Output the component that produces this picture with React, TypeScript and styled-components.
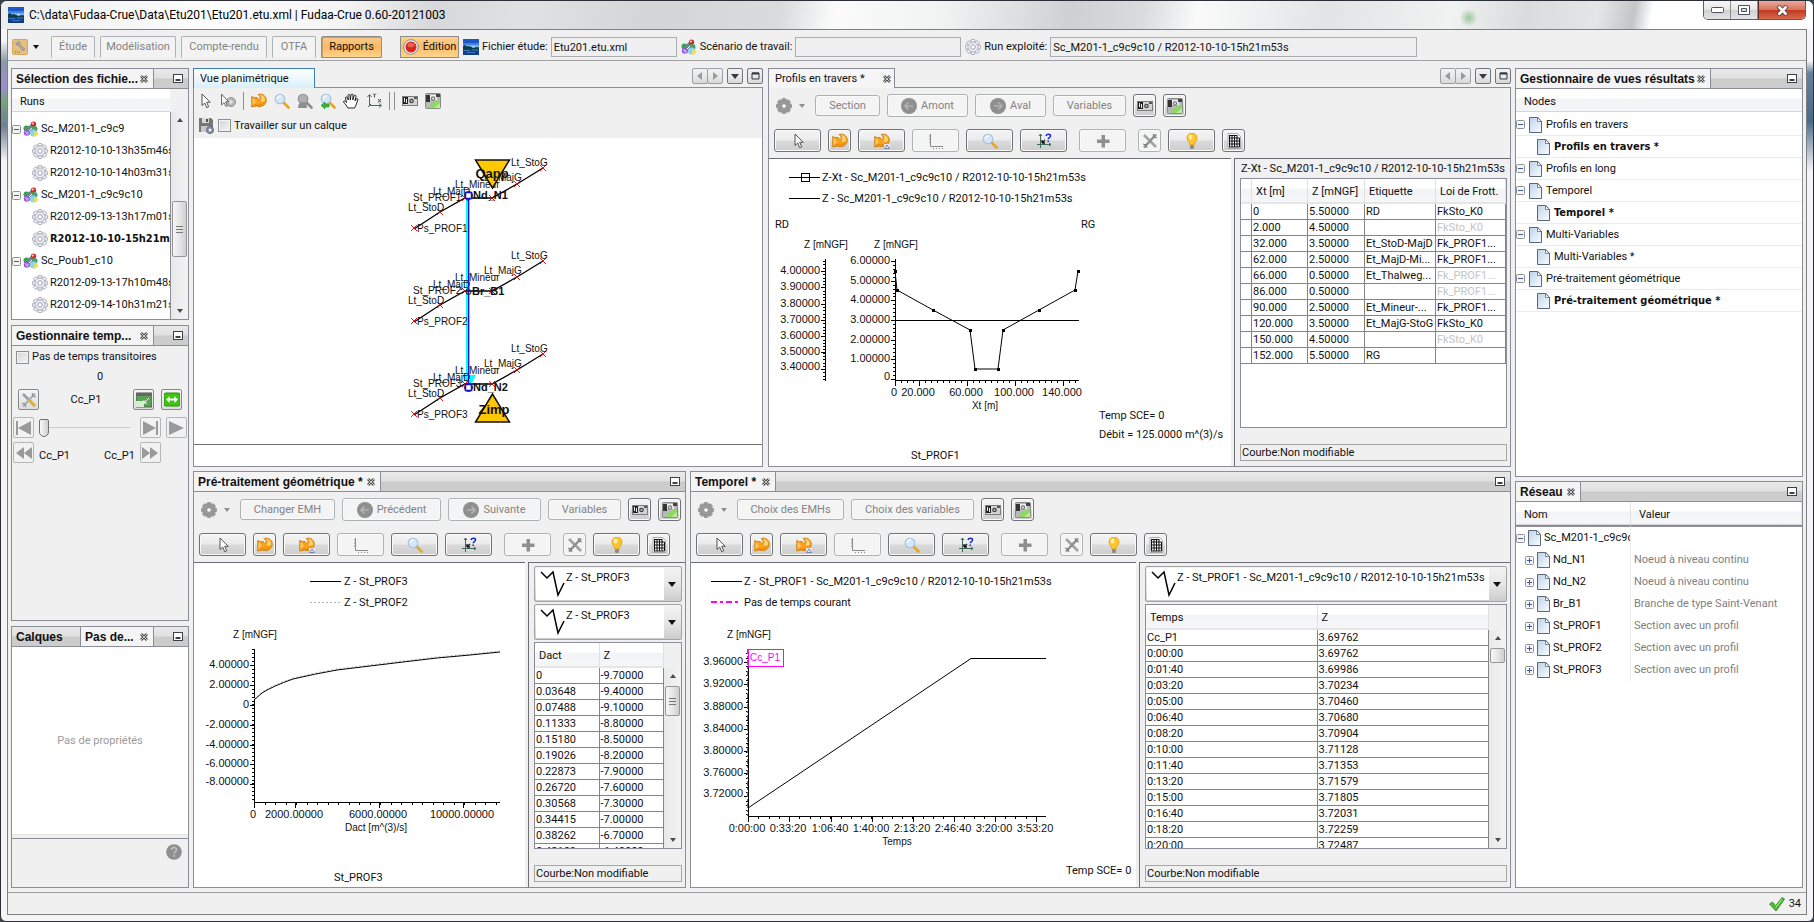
import React, { ReactNode, useState } from 'react';
import styled, { createGlobalStyle, css } from 'styled-components';

const GlobalStyle = createGlobalStyle`
  * { box-sizing: border-box; }
  body { margin: 0; background: #3a4450; color: #111; font: 11px/14px Roboto, "DejaVu Sans Condensed", sans-serif; }
  button, input, select { font: inherit; color: inherit; margin: 0; padding: 0; }
  ul { list-style: none; margin: 0; padding: 0; }
  svg { display: block; flex: none; }
`;

const LINE = '#8b8d99';

/* ---------- window frame ---------- */

const Frame = styled.div`
  height: 100vh;
  min-height: 800px;
  min-width: 1500px;
  display: flex;
  flex-direction: column;
  border: 1px solid #2b2e36;
  border-radius: 7px 7px 6px 6px;
  padding: 0 6px 6px;
  background:
    linear-gradient(180deg, transparent 60px, #64809c 72px, #4b6a88 120px, #8fa4b6 140px, transparent 170px) right / 6px 100% no-repeat,
    linear-gradient(180deg, transparent 40px, #8c9aa8 60px, #9b8fcf 85px, #7aa37c 100px, #6e8194 125px, transparent 160px) left / 6px 100% no-repeat,
    #f6f4f4;
`;

const TitleBar = styled.header`
  height: 28px;
  flex: none;
  display: flex;
  align-items: center;
  gap: 5px;
  margin: 0 -6px;
  padding-left: 7px;
  border-radius: 6px 6px 0 0;
  font-size: 12px;
  line-height: 16px;
  color: #000;
  background:
    radial-gradient(circle at 81% 60%, #9ac79c 0, transparent 9px),
    linear-gradient(100deg, #eceeee 0, #fdfdfd 12%, #f4f4f4 19%, #d6d8da 24%, #dfe1e2 29%, #d3d5d6 36%, #d9dbdc 43%, #fbfbfb 46%, #f1f2f2 52%, #ced1d3 59%, #d9dcdd 63%, #fafafa 66%, #e2e4e5 73%, #f1f2f2 80%, #d9dbdc 84%, #e4e5e6 88%, #c3c5c7 90%, #fff 91%, #fff 100%);
`;

const WindowButtons = styled.div`
  margin-left: auto;
  margin-right: 7px;
  align-self: flex-start;
  display: flex;
  height: 19px;
  border: 1px solid #5b5e63;
  border-top: 0;
  border-radius: 0 0 5px 5px;
  overflow: hidden;
`;

const WindowButton = styled.button<{ $close?: boolean }>`
  width: ${p => (p.$close ? 47 : 27)}px;
  display: grid;
  place-items: center;
  border: 0;
  border-left: ${p => (p.$close ? '1px solid #5b2a22' : '0')};
  border-right: ${p => (p.$close ? '0' : '1px solid #8a8d91')};
  background: ${p =>
    p.$close
      ? 'linear-gradient(#e9a99b, #d8735f 48%, #c03a20 52%, #d8694c)'
      : 'linear-gradient(#f7f7f7, #e6e6e7 48%, #cfd0d2 52%, #e3e4e5)'};
`;

const Client = styled.div`
  flex: 1;
  min-height: 0;
  display: flex;
  flex-direction: column;
  border: 1px solid #7d8080;
  background: #f0f0f0;
`;

/* ---------- main tool bar ---------- */

const MainBar = styled.nav`
  height: 31px;
  flex: none;
  display: flex;
  align-items: center;
  padding: 4px 4px 0;
  border-bottom: 1px solid #a0a0a0;
`;

const PerspectiveRow = styled.div`
  display: flex;
  gap: 5px;
  margin: 0 18px 0 12px;
`;

const Perspective = styled.button<{ $w: number; $on?: boolean }>`
  width: ${p => p.$w}px;
  height: 22px;
  border: 1px solid #aeb2b5;
  border-bottom-color: ${p => (p.$on ? '#8d8d8d' : '#f0f0f0')};
  border-radius: 2px 2px 0 0;
  color: ${p => (p.$on ? '#111' : '#838383')};
  background: ${p => (p.$on ? 'linear-gradient(#fbcb8c, #f8b762 50%, #fdd48a)' : '#f3f3f3')};
  ${p => p.$on && css`border-color: #8d8d8d; box-shadow: inset 1px 1px 0 #c7a06c;`}
`;

const EditButton = styled.button`
  height: 22px;
  width: 59px;
  display: flex;
  align-items: center;
  justify-content: center;
  gap: 4px;
  border: 1px solid #8d8d8d;
  background: linear-gradient(#ffd08f, #fcbc69 50%, #ffd58e);
`;

const BarField = styled.label`
  display: flex;
  align-items: center;
  gap: 3px;
  margin-left: 4px;
  white-space: nowrap;
`;

const BarInput = styled.input<{ $w: number }>`
  width: ${p => p.$w}px;
  height: 20px;
  border: 1px solid #abadb3;
  background: #efefef;
  padding: 0 2px;
`;

/* ---------- docking layout ---------- */

const Main = styled.main`
  flex: 1;
  min-height: 0;
  display: grid;
  grid-template-columns: 178px minmax(0, 1fr) 288px;
  gap: 4px;
  padding: 7px 3px 4px;
`;

const LeftDock = styled.div`
  display: grid;
  grid-template-rows: 252fr 296fr 262fr;
  gap: 5px;
  min-height: 0;
`;

const CenterDock = styled.div`
  display: grid;
  grid-template-rows: minmax(0, 399fr) minmax(0, 417fr);
  gap: 4px;
  min-height: 0;
`;

const DockRow = styled.div<{ $cols: string; $gap: number }>`
  display: grid;
  grid-template-columns: ${p => p.$cols};
  gap: ${p => p.$gap}px;
  min-height: 0;
`;

const RightDock = styled.div`
  display: grid;
  grid-template-rows: 409fr 407fr;
  gap: 4px;
  min-height: 0;
`;

const Panel = styled.section`
  display: flex;
  flex-direction: column;
  min-height: 0;
  min-width: 0;
  border: 1px solid ${LINE};
  overflow: hidden;
`;

const PanelHead = styled.div`
  height: 20px;
  flex: none;
  display: flex;
  border-bottom: 1px solid ${LINE};
  background: linear-gradient(#e9e9e9, #e0e0e0 48%, #cbcbcb 52%, #cdcdcd);
`;

const PanelTab = styled.div<{ $w: number; $off?: boolean }>`
  width: ${p => p.$w}px;
  display: flex;
  align-items: center;
  justify-content: space-between;
  padding: 0 5px 0 4px;
  border-right: 1px solid ${LINE};
  background: ${p => (p.$off ? 'transparent' : '#f4f4f4')};
  font: bold 12px/18px "Liberation Sans", Arial, sans-serif;
  white-space: nowrap;
`;

const IconButton = styled.button`
  display: grid;
  place-items: center;
  border: 0;
  background: none;
`;

const MinimizeSlot = styled.div`
  margin-left: auto;
  padding-right: 5px;
  display: flex;
`;

const Body = styled.div<{ $white?: boolean }>`
  flex: 1;
  min-height: 0;
  display: flex;
  flex-direction: column;
  background: ${p => (p.$white ? '#fff' : '#f0f0f0')};
`;

const Editor = styled.section`
  display: flex;
  flex-direction: column;
  min-height: 0;
  min-width: 0;
`;

const EditorHead = styled.div`
  height: 20px;
  flex: none;
  display: flex;
  border-bottom: 1px solid ${LINE};
`;

const EditorTab = styled.div<{ $w: number; $active?: boolean }>`
  width: ${p => p.$w}px;
  height: 20px;
  display: flex;
  align-items: center;
  justify-content: space-between;
  padding: 0 3px 0 6px;
  border: 1px solid ${p => (p.$active ? '#3c7fb1' : LINE)};
  border-bottom: 0;
  background: ${p => (p.$active ? 'linear-gradient(#fdfeff, #e9f6fd 60%, #d7effc)' : '#f5f5f5')};
`;

const EditorBody = styled.div`
  flex: 1;
  min-height: 0;
  display: flex;
  flex-direction: column;
  border: 1px solid ${LINE};
  border-top: 0;
  background: #f0f0f0;
`;

const NavRow = styled.div`
  margin-left: auto;
  display: flex;
  gap: 4px;
  height: 16px;
`;

const NavGroup = styled.div`
  display: flex;
`;

const NavButton = styled.button`
  width: 16px;
  height: 16px;
  display: grid;
  place-items: center;
  border: 1px solid #6f7680;
  border-radius: 2px;
  background: linear-gradient(#f2f2f2, #e9e9e9 50%, #d8d8d8);
  &:disabled { border-color: #9a9ea5; }
  & + &:disabled { margin-left: -1px; }
`;

/* ---------- columns, trees, tables ---------- */

const ColumnHead = styled.div<{ $w?: string }>`
  height: 23px;
  flex: none;
  width: ${p => p.$w ?? '100%'};
  padding: 6px 8px 0;
  border-bottom: 1px solid #d5d5d5;
  background: linear-gradient(#fff 40%, #f2f4f7 45%, #f4f6f8);
`;

const TreeArea = styled.div`
  flex: 1;
  min-height: 0;
  display: flex;
  overflow: hidden;
`;

const Tree = styled.ul<{ $lines?: boolean; $clip?: boolean }>`
  flex: 1;
  min-width: 0;
  overflow: hidden;
  background: #fff;
  padding-top: ${p => (p.$clip ? 6 : 2)}px;
  border-right: ${p => (p.$clip ? `1px solid ${LINE}` : '0')};
  & > li { border-bottom: ${p => (p.$lines ? '1px solid #ececec' : '0')}; }
`;

const TreeItem = styled.li<{ $indent: number; $gap?: number; $bold?: boolean }>`
  height: 22px;
  display: flex;
  align-items: center;
  gap: ${p => p.$gap ?? 4}px;
  padding-left: ${p => p.$indent}px;
  white-space: nowrap;
  ${p => p.$bold && css`font-family: "DejaVu Sans Condensed", sans-serif; font-weight: bold;`}
`;

const ScrollTrack = styled.div`
  width: 17px;
  flex: none;
  display: flex;
  flex-direction: column;
  align-items: center;
  padding: 6px 0;
  background: linear-gradient(90deg, #e9e9e9, #f3f3f3);
`;

const ScrollThumb = styled.div<{ $top: number; $h: number }>`
  width: 15px;
  height: ${p => p.$h}px;
  margin-top: ${p => p.$top}px;
  margin-bottom: auto;
  border: 1px solid #979797;
  border-radius: 2px;
  background: linear-gradient(90deg, #f5f5f5, #e6e6e6 50%, #cfcfcf);
  display: grid;
  place-items: center;
`;

const TableBox = styled.div`
  flex: 1;
  min-height: 0;
  display: flex;
  overflow: hidden;
  border: 1px solid ${LINE};
  background: #fff;
`;

const TableClip = styled.div`
  flex: 1;
  min-width: 0;
  overflow: hidden;
`;

const ScrollSide = styled.div`
  display: flex;
  flex: none;
  padding-top: 25px;
  background: #f0f0f0;
`;

const Table = styled.table`
  width: 100%;
  table-layout: fixed;
  border-collapse: separate;
  border-spacing: 0;
`;

const Th = styled.th`
  height: 25px;
  padding: 3px 4px 0;
  font-weight: normal;
  text-align: left;
  white-space: nowrap;
  border-right: 1px solid #e0e0e0;
  border-bottom: 2px solid #e6e6e6;
  background: linear-gradient(#fff 40%, #f2f4f7 45%, #f4f6f8);
`;

const Td = styled.td<{ $dim?: boolean }>`
  height: 16px;
  padding: 0 0 0 1px;
  line-height: 15px;
  white-space: nowrap;
  overflow: hidden;
  border-right: 1px solid #858585;
  border-bottom: 1px solid #858585;
  color: ${p => (p.$dim ? '#c4c4c4' : 'inherit')};
`;

const NetTable = styled.table`
  width: 100%;
  table-layout: fixed;
  border-collapse: separate;
  border-spacing: 0;
  td { padding: 0; border-right: 1px solid #ececec; overflow: hidden; height: 22px; }
  td + td { border-right: 0; color: #808080; padding-left: 3px; white-space: nowrap; }
  th { height: 23px; padding: 4px 8px 0; font-weight: normal; text-align: left; border-right: 1px solid #e2e2e2; border-bottom: 1px solid #d5d5d5; background: linear-gradient(#fff 40%, #f2f4f7 45%, #f4f6f8); }
  tbody tr:first-child td { border-top: 2px solid ${LINE}; height: 24px; }
`;

const NetCell = styled.div<{ $indent: number }>`
  display: flex;
  align-items: center;
  gap: 3px;
  padding-left: ${p => p.$indent}px;
  white-space: nowrap;
`;

/* ---------- result view tool bars ---------- */

const ViewBar = styled.div`
  height: 35px;
  flex: none;
  display: flex;
  align-items: center;
  gap: 7px;
  padding: 0 5px;
`;

const OptionsButton = styled.button`
  width: 34px;
  flex: none;
  display: flex;
  align-items: center;
  justify-content: space-between;
  padding: 0 3px 0 2px;
  border: 0;
  background: none;
`;

const SwingButton = styled.button<{ $w: number; $h?: number; $left?: number }>`
  width: ${p => p.$w}px;
  height: ${p => p.$h ?? 23}px;
  margin-left: ${p => p.$left ?? 0}px;
  flex: none;
  display: flex;
  align-items: center;
  justify-content: center;
  gap: 4px;
  border: 1px solid #707378;
  border-radius: 3px;
  background: linear-gradient(#f4f4f4, #ebebeb 48%, #dadada 52%, #cdcdcd);
  box-shadow: inset 0 0 0 1px #fafafa;
  &:disabled { border-color: #adb2b5; background: #f4f4f4; color: #838383; }
`;

const SplitView = styled.div<{ $cols: string }>`
  flex: 1;
  min-height: 0;
  display: grid;
  grid-template-columns: ${p => p.$cols};
  gap: 3px;
`;

const ChartArea = styled.div`
  min-width: 0;
  overflow: hidden;
  border-top: 1px solid #6d6d74;
  background: #fff;
`;

const SidePane = styled.div`
  min-width: 0;
  min-height: 0;
  display: flex;
  flex-direction: column;
  padding: 3px 3px 5px 5px;
  border-top: 1px solid #6d6d74;
  border-left: 1px solid #6d6d74;
`;

const PaneTitle = styled.div`
  height: 16px;
  flex: none;
  padding: 0 1px;
  white-space: nowrap;
`;

const CurveStatus = styled.div`
  height: 17px;
  flex: none;
  margin-top: 16px;
  padding: 0 1px;
  border: 1px solid #a6a6a6;
  line-height: 16px;
`;

const ComboBox = styled.label`
  height: 36px;
  flex: none;
  margin-bottom: 2px;
  display: flex;
  border: 1px solid #a3a3a3;
  border-radius: 2px;
  padding: 1px;
  background: linear-gradient(#f3f3f3, #e6e6e6 50%, #cdcdcd);
`;

const ComboFace = styled.span`
  flex: 1;
  min-width: 0;
  display: flex;
  padding: 2px 0 0 3px;
  background: #fff;
`;

const ComboSelect = styled.select`
  flex: 1;
  min-width: 0;
  height: 16px;
  appearance: none;
  border: 0;
  background: none;
`;

const ComboArrow = styled.span`
  width: 16px;
  display: grid;
  place-items: center;
`;

/* ---------- plan view ---------- */

const IconRow = styled.div<{ $pad: number; $gap: number }>`
  height: 25px;
  flex: none;
  display: flex;
  align-items: center;
  gap: ${p => p.$gap}px;
  padding: 0 ${p => p.$pad}px;
`;

const Divider = styled.i<{ $double?: boolean }>`
  width: ${p => (p.$double ? 6 : 1)}px;
  height: 18px;
  border: solid #909090;
  border-width: 0 ${p => (p.$double ? 1 : 0)}px 0 1px;
`;

const MapArea = styled.div`
  flex: 1;
  min-height: 0;
  overflow: hidden;
  background: #fff;
`;

const MapStatus = styled.div`
  height: 22px;
  flex: none;
  border-top: 1px solid #707070;
  background: #fff;
`;

const CheckLabel = styled.label`
  display: flex;
  align-items: center;
  gap: 3px;
  white-space: nowrap;
`;

const CheckBox = styled.input`
  appearance: none;
  width: 13px;
  height: 13px;
  flex: none;
  border: 1px solid #8e8f8f;
  background: linear-gradient(135deg, #cfd3d8, #f6f6f6);
  box-shadow: inset 0 0 0 1px #f4f4f4;
`;

/* ---------- time manager ---------- */

const TimeGrid = styled.div`
  display: flex;
  flex-direction: column;
  padding: 4px 1px 0;
`;

const TimeValue = styled.div`
  text-align: center;
  height: 15px;
  margin-top: 6px;
`;

const TimeRow = styled.div<{ $top: number; $pad: number; $gap: number }>`
  display: flex;
  align-items: center;
  margin-top: ${p => p.$top}px;
  padding: 0 ${p => p.$pad}px;
  gap: ${p => p.$gap}px;
`;

const TimeName = styled.span<{ $align: 'left' | 'center' | 'right' }>`
  flex: 1;
  text-align: ${p => p.$align};
  align-self: ${p => (p.$align === 'center' ? 'center' : 'flex-end')};
`;

const TimeSpacer = styled.span`
  width: 21px;
  flex: none;
`;

const Small = styled.button<{ $flat?: boolean }>`
  width: 21px;
  height: 21px;
  flex: none;
  display: grid;
  place-items: center;
  border: 1px solid ${p => (p.$flat ? '#b3b7ba' : '#85888c')};
  border-radius: 2px;
  background: ${p => (p.$flat ? '#f2f2f2' : 'linear-gradient(#f6f6f6, #dcdcdc)')};
`;

const Slider = styled.input`
  appearance: none;
  flex: 1;
  min-width: 0;
  height: 19px;
  margin-right: 5px;
  background: linear-gradient(#b9b9b9, #fff) center / 100% 2px no-repeat;
  &::-webkit-slider-thumb {
    appearance: none;
    width: 10px;
    height: 18px;
    border: 1px solid #6f7275;
    border-radius: 2px 2px 5px 5px;
    background: linear-gradient(90deg, #fafafa, #cfcfcf);
  }
`;

const EmptyProps = styled.div`
  flex: 1;
  display: grid;
  place-items: center;
  color: #9a9a9a;
  background: #fff;
  border-bottom: 1px solid #e2e2e2;
`;

const PropsHelp = styled.div`
  height: 49px;
  flex: none;
  margin-top: 3px;
  border-top: 1px solid ${LINE};
  display: flex;
  justify-content: flex-end;
  align-items: flex-start;
  padding: 5px 6px;
`;

const StatusBar = styled.footer`
  height: 22px;
  flex: none;
  display: flex;
  align-items: center;
  justify-content: flex-end;
  gap: 4px;
  padding: 0 5px;
  border-top: 1px solid #9a9a9a;
`;

/* ---------- icons ---------- */

type IconProps = { size?: number; children?: ReactNode };
const Svg = ({ size = 16, children }: IconProps) => (
  <svg width={size} height={size} viewBox="0 0 16 16" aria-hidden="true">{children}</svg>
);

const Landscape = () => (
  <Svg>
    <path fill="#1d57c9" d="M0 0h16v16H0z" /><path fill="#3f83dd" d="M0 4h16v2H0z" /><path fill="#79b0ee" d="M0 6h16v2H0z" />
    <path d="M0 7l2-1 2 1.500L6 7l3 1.500L16 9v1H0z" fill="#123a4a" /><path fill="#123f86" d="M0 10h16v6H0z" />
    <path fill="#3d78c4" d="M1 11h6v1H1zM9 10.500h6v1H9zM4 13h8v1H4z" /><path fill="#e2f0fa" d="M9 7.500h3v1H9z" />
  </Svg>
);
const Tools = () => (
  <Svg>
    <rect width="16" height="16" rx="2" fill="#d6a85f" /><rect x="1" y="1" width="14" height="14" rx="1" fill="#e6bf80" />
    <path d="M4 3a3 3 0 0 0 3 4l4 5 2-2-5-4a3 3 0 0 0-2-4l1 2-1 1-2-2z" fill="#a3a8ae" stroke="#7e8186" strokeWidth=".5" />
    <path d="M3 13h5" stroke="#6b6b6b" strokeDasharray="1 1" />
  </Svg>
);
const Gear = ({ color = '#9b9fae', fill = '#eef0f6', size = 16 }: { color?: string; fill?: string; size?: number }) => (
  <Svg size={size}>
    {[0, 45, 90, 135, 180, 225, 270, 315].map(a => (
      <rect key={a} x="6" y=".5" width="4" height="4" rx="1" fill={fill} stroke={color} strokeWidth=".8" transform={`rotate(${a} 8 8)`} />
    ))}
    <circle cx="8" cy="8" r="5" fill={fill} stroke={color} strokeWidth=".8" />
    <circle cx="8" cy="8" r="2.3" fill="#fff" stroke={color} />
  </Svg>
);
const Scenario = () => (
  <Svg>
    <circle cx="3.500" cy="7.500" r="3" fill="#35a548" /><circle cx="4" cy="11.500" r="3.200" fill="#9a55d6" />
    <path d="M1 10l5 1-1 4z" fill="#c7a5ee" /><path d="M3 8L8.500 2.500l4 1L10 10H6z" fill="#6d8790" />
    <circle cx="10.500" cy="3.200" r="2.600" fill="#d22b20" /><circle cx="9.800" cy="2.500" r="1" fill="#ffe3df" />
    <circle cx="11.500" cy="8" r="3" fill="#49a06a" /><circle cx="10.500" cy="12" r="3.600" fill="#8ed2f2" />
    <path d="M10 15.500a5 5 0 0 0 5.500-3.500L12 10z" fill="#f0df4a" /><path d="M6 10l3-3" stroke="#fff" />
  </Svg>
);
const Doc = () => (
  <svg width="13" height="16" viewBox="0 0 13 16" aria-hidden="true">
    <defs><linearGradient id="docFill" x1="0" y1="0" x2="1" y2="1"><stop offset="0" stopColor="#bcd2ea" /><stop offset="1" stopColor="#fbfdff" /></linearGradient></defs>
    <path d="M.5.5h8.300l3.700 3.700v11.300H.5z" fill="url(#docFill)" stroke="#59677b" />
    <path d="M8.500.5v4h4z" fill="#fff" stroke="#59677b" strokeWidth=".8" />
  </svg>
);
const Expander = ({ open }: { open?: boolean }) => (
  <svg width="9" height="9" viewBox="0 0 9 9" aria-hidden="true">
    <rect x=".5" y=".5" width="8" height="8" rx="1" fill="#f5f5f5" stroke="#919191" />
    <path d={open ? 'M2 4.500h5' : 'M2 4.500h5M4.500 2v5'} stroke="#3a5a9a" />
  </svg>
);
const CloseMark = () => (
  <svg width="8" height="8" viewBox="0 0 8 8" aria-hidden="true">
    <path d="M1 1l6 6M7 1L1 7" stroke="#4c4c4c" strokeWidth="2.800" />
    <path d="M1 1l6 6M7 1L1 7" stroke="#f4f4f4" strokeWidth=".8" />
  </svg>
);
const Minimize = () => (
  <svg width="10" height="9" viewBox="0 0 10 9" aria-hidden="true">
    <rect x=".5" y=".5" width="9" height="8" fill="#fff" stroke="#3c4048" /><path d="M2.500 6h5" stroke="#3c4048" strokeWidth="2" />
  </svg>
);
const Caret = ({ color = '#111', up }: { color?: string; up?: boolean }) => (
  <svg width="6" height="4" viewBox="0 0 6 4" aria-hidden="true"><path d={up ? 'M0 4l3-4 3 4z' : 'M0 0h6L3 4z'} fill={color} /></svg>
);
const Arrow = () => (
  <Svg><path d="M5 1v11.500l2.700-2.500 2 4.700 2-.9-2-4.500h3.500z" fill="#fff" stroke="#3f3f3f" strokeWidth=".9" /></Svg>
);
const ArrowGear = () => (
  <Svg>
    <circle cx="11" cy="9" r="4.500" fill="#b9b9b9" stroke="#8f8f8f" /><circle cx="11" cy="9" r="1.800" fill="#e2e2e2" />
    <path d="M1.500 1v11l2.500-2.400 2 4 1.500-.8-1.800-4h3z" fill="#f6f6f6" stroke="#6a6a6a" />
  </Svg>
);
const OrangeTurn = () => (
  <>
    <path d="M.7 3.500l3 1.300C6 3.500 7 5.500 8 6.500c1.500 0 2-2.500-.8-5C12 0 15.600 3.500 15.300 7.500 15 12 10.500 15 5.500 13L.7 14z" fill="#f9a11b" stroke="#c37608" strokeWidth=".8" strokeLinejoin="round" />
    <path d="M9 2c3.500.2 5 2.500 5 5.500-1.500 1.500-3 1.500-4.500.5 1.500-2 1.500-4-.5-6z" fill="#ffd471" /><path d="M1.500 5l2 1.200 1.500 3-3.500 3z" fill="#ffc65a" />
    <path d="M3 11.500c4 1.500 8 .5 10-2" stroke="#e07d06" fill="none" />
  </>
);
const Undo = () => <Svg><OrangeTurn /></Svg>;
const UndoZoom = () => (
  <Svg><OrangeTurn /><rect x="10" y="11" width="6" height="5" fill="#e5e8ef" /><path d="M10.500 15.500l2.500-3.500 2.500 3.500z" fill="none" stroke="#5b6a9b" strokeWidth=".8" /></Svg>
);
const Magnifier = ({ gray, green }: { gray?: boolean; green?: boolean }) => (
  <Svg>
    <path d="M9.500 9.500l5 5" stroke={gray ? '#8c8c8c' : '#e3a52e'} strokeWidth="2.600" strokeLinecap="round" />
    <circle cx="6" cy="6" r="4.800" fill={gray ? '#b1b1b1' : '#d3e7f8'} stroke={gray ? '#8f8f8f' : '#a3bfda'} strokeWidth="1.100" />
    {!gray && <path d="M3.500 6A3 3 0 0 1 7 3" stroke="#fff" strokeWidth="1.300" fill="none" />}
    {gray && <path d="M1 15c0-4 2-6 5-6s4 2 4 6z" fill="#8e8e8e" />}
    {green && <path d="M1 12.500l4-3.500v2h4v3H5v2z" fill="#39b53a" stroke="#1d7f22" strokeWidth=".5" />}
  </Svg>
);
const Hand = () => (
  <Svg><path d="M5 15l-2-3-2.500-3c0-1.500 1.500-1.500 3 .5L2.500 5c0-1.500 1.700-1.500 2 0l.8 2L5 2.500C5 1 7 1 7 2.500L7.300 7 8 2c.2-1.500 2-1.300 2 0l-.2 5 1.200-4c.5-1.500 2-1 2 .3L12 8l1.200-2c.8-1 2-.3 1.600 1L13 12l-1.500 3z" fill="#fff" stroke="#111" strokeWidth=".9" /></Svg>
);
const AxesXY = () => (
  <Svg>
    <path d="M3.500 2v10.500H15M1.500 4l2-2.500 2 2.500M13 10.500l2.500 2-2.500 2M2 14l3-3" stroke="#4a6a5c" fill="none" />
    <path d="M7 .5L8.500 2 10 .5M8.500 2v2.500M12 6l3 3.500M15 6l-3 3.500" stroke="#333" fill="none" strokeWidth=".9" />
  </Svg>
);
const Camera = () => (
  <Svg>
    <path fill="#7d7d7d" d="M0 3h16v10H0z" /><path fill="#d4d4d4" d="M1 4h14v8H1z" /><path fill="#222" d="M1 4h5v7H1z" /><path fill="#eee" d="M2 5h1v4H2zM4 6h1v4H4z" />
    <circle cx="9.500" cy="8" r="2.300" fill="#444" /><circle cx="9.500" cy="8" r="1" fill="#ccc" /><path fill="#555" d="M12 4h3v2h-3z" />
  </Svg>
);
const Photo = () => (
  <Svg>
    <rect x=".5" y=".5" width="15" height="15" rx="1" fill="#b9b9b9" stroke="#8b8b8b" /><path fill="#333" d="M1 2h4v7H1z" /><path fill="#eee" d="M5 2h7v5H5z" />
    <circle cx="8" cy="5.500" r="2.200" fill="#777" /><circle cx="8" cy="5.500" r="1" fill="#eee" /><path fill="#444" d="M11 1h4v3h-4z" />
    <path d="M4 15c1-4 4-7 11-8v8z" fill="#8fd868" /><path d="M9 15l6-5v5z" fill="#b8f08f" />
  </Svg>
);
const Floppy = () => (
  <Svg>
    <path d="M1 0h12l2 2v12H1z" fill="#757575" /><path fill="#d9d9d9" d="M4 0h7v5H4z" /><path fill="#555" d="M8 1h2v3H8z" /><path fill="#c7c7c7" d="M3 8h10v6H3z" />
    <circle cx="12" cy="12" r="3.500" fill="#8e99ad" stroke="#5a6680" /><circle cx="12" cy="12" r="1.200" fill="#fff" />
  </Svg>
);
const RoundArrow = ({ right }: { right?: boolean }) => (
  <Svg><circle cx="8" cy="8" r="8" fill="#8f8f8f" /><path d={right ? 'M4 8h8M8.500 4.500L12 8l-3.500 3.500' : 'M12 8H4M7.500 4.500L4 8l3.500 3.500'} stroke="#b4b4b4" strokeWidth="1.600" fill="none" /></Svg>
);
const ChartAxes = () => (
  <Svg><path d="M2.500 1v12.500H15M1 3h1M1 6h1M1 9h1" stroke="#8b8b8b" fill="none" /><path d="M5 15.500h10" stroke="#8b8b8b" strokeDasharray="1 2" /></Svg>
);
const AxesHelp = () => (
  <Svg>
    <path d="M4.500 1v14M1 11.500h14M3 3l1.500-2L6 3M13 10l2 1.500-2 1.500" stroke="#41695a" fill="none" />
    <path d="M6 10l3-3M6 10V7M6 10h3" stroke="#111" strokeWidth="1.300" />
    <path d="M10 3C10.500.8 14.500.8 14.500 3c0 1.500-2.300 1.700-2.300 3.300M12.200 7.500v1.400" stroke="#1728d8" strokeWidth="1.500" fill="none" />
  </Svg>
);
const Plus = () => <Svg><path d="M6.500 2h3.500v4.500h4.500V10H10v4.500H6.500V10H2V6.500h4.500z" fill="#8f8f8f" /></Svg>;
const CrossTools = ({ color }: { color?: boolean }) => (
  <Svg>
    <path d="M2 2l12 12" stroke={color ? '#9a9da0' : '#a2a2a2'} strokeWidth="2.600" /><path d="M14 1.500L2 14.500" stroke={color ? '#a9b0b4' : '#8d8d8d'} strokeWidth="2.400" />
    {color && <path d="M8 8l6 6" stroke="#dcb43a" strokeWidth="3" />}
    <path d="M11 1l1 3 3 1M1 11l3 1 1 3" stroke={color ? '#80868a' : '#777'} fill="none" />
  </Svg>
);
const Bulb = () => (
  <Svg>
    <path d="M8 0a5 5 0 0 0-5 5c0 3 2.500 3.500 2.800 7h4.400C10.500 8.500 13 8 13 5a5 5 0 0 0-5-5z" fill="#fdc62e" stroke="#e39a14" strokeWidth=".8" />
    <ellipse cx="6.500" cy="4" rx="2" ry="2.500" fill="#fff0a8" /><rect x="6" y="12" width="4" height="4" rx="1" fill="#8d8d8d" />
  </Svg>
);
const GridDoc = () => (
  <Svg><path d="M2 .5h9.500l3 3v12H2z" fill="#fafafa" stroke="#aaa" /><path d="M3 2.500h8M3 5h10.500M3 8h10.500M3 11h10.500M3 14h10.500M3.500 2v12M6 2v12M8.500 2v12M11 2v12M13.500 5v9" stroke="#111" /></Svg>
);
const Curve = () => (
  <svg width="27" height="28" viewBox="0 0 27 28" aria-hidden="true"><path d="M2 2l6 6 6-6 5 23 6-12" fill="none" stroke="#000" strokeWidth="1.500" /></svg>
);
const Play = ({ d }: { d: string }) => <svg width="17" height="16" viewBox="0 0 17 16" aria-hidden="true"><path d={d} fill="#9a9a9a" /></svg>;

/* ---------- shared parts ---------- */

const Scroll = ({ top, h }: { top: number; h: number }) => (
  <ScrollTrack>
    <Caret up color="#4a4a4a" />
    <ScrollThumb $top={top} $h={h}>
      {h > 25 && <svg width="8" height="8" viewBox="0 0 8 8" aria-hidden="true"><path d="M0 1.500h7M0 4.500h7M0 7.500h7" stroke="#777" /></svg>}
    </ScrollThumb>
    <Caret color="#4a4a4a" />
  </ScrollTrack>
);

const DockPanel = ({ title, tab, before, children }: { title: string; tab: number; before?: ReactNode; children: ReactNode }) => (
  <Panel>
    <PanelHead>
      {before}
      <PanelTab $w={tab}>{title}<IconButton aria-label="Fermer"><CloseMark /></IconButton></PanelTab>
      <MinimizeSlot><IconButton aria-label="Réduire"><Minimize /></IconButton></MinimizeSlot>
    </PanelHead>
    {children}
  </Panel>
);

const EditorNav = () => (
  <NavRow>
    <NavGroup>
      <NavButton disabled aria-label="Précédent"><svg width="6" height="8" viewBox="0 0 6 8"><path d="M5 0v8L0 4z" fill="#9a9a9a" /></svg></NavButton>
      <NavButton disabled aria-label="Suivant"><svg width="6" height="8" viewBox="0 0 6 8"><path d="M1 0v8l5-4z" fill="#9a9a9a" /></svg></NavButton>
    </NavGroup>
    <NavButton aria-label="Liste"><svg width="8" height="5" viewBox="0 0 8 5"><path d="M0 0h8L4 5z" fill="#333b45" /></svg></NavButton>
    <NavButton aria-label="Agrandir"><svg width="9" height="8" viewBox="0 0 9 8"><path d="M1 1h7v6H1z" fill="none" stroke="#333b45" /><path d="M1 1.500h7" stroke="#333b45" strokeWidth="2" /></svg></NavButton>
  </NavRow>
);

type Action = { label: string; w: number; arrow?: 'left' | 'right' };

const ViewToolbars = ({ actions }: { actions: Action[] }) => (
  <>
    <ViewBar>
      <OptionsButton disabled aria-label="Options"><Gear color="#8f8f8f" fill="#9c9c9c" /><Caret color="#8f8f8f" /></OptionsButton>
      {actions.map(a => (
        <SwingButton key={a.label} disabled $w={a.w} $h={a.arrow ? 23 : 21}>
          {a.arrow && <RoundArrow right={a.arrow === 'right'} />}{a.label}
        </SwingButton>
      ))}
      <SwingButton $w={23} aria-label="Copier l'image"><Camera /></SwingButton>
      <SwingButton $w={23} aria-label="Enregistrer l'image"><Photo /></SwingButton>
    </ViewBar>
    <ViewBar>
      <SwingButton $w={47} aria-label="Sélection"><Arrow /></SwingButton>
      <SwingButton $w={23} aria-label="Restaurer"><Undo /></SwingButton>
      <SwingButton $w={47} aria-label="Restaurer tout"><UndoZoom /></SwingButton>
      <SwingButton $w={47} disabled aria-label="Axes"><ChartAxes /></SwingButton>
      <SwingButton $w={47} aria-label="Zoom"><Magnifier /></SwingButton>
      <SwingButton $w={47} aria-label="Suivi"><AxesHelp /></SwingButton>
      <SwingButton $w={47} $left={5} disabled aria-label="Ajouter"><Plus /></SwingButton>
      <SwingButton $w={23} $left={5} disabled aria-label="Configurer"><CrossTools /></SwingButton>
      <SwingButton $w={47} aria-label="Astuce"><Bulb /></SwingButton>
      <SwingButton $w={23} aria-label="Tableau"><GridDoc /></SwingButton>
    </ViewBar>
  </>
);

const Combo = ({ value, name }: { value: string; name: string }) => (
  <ComboBox>
    <ComboFace>
      <Curve />
      <ComboSelect aria-label={name} defaultValue={value}><option>{value}</option></ComboSelect>
    </ComboFace>
    <ComboArrow><svg width="8" height="5" viewBox="0 0 8 5"><path d="M0 0h8L4 5z" fill="#111" /></svg></ComboArrow>
  </ComboBox>
);

/* ---------- charts ---------- */

const ChartSvg = styled.svg`
  text { font: 11px "Liberation Sans", Arial, sans-serif; fill: #111; }
  .unit { font-size: 10px; }
  .ui { font-family: Roboto, sans-serif; font-size: 11px; }
  .end { text-anchor: end; }
  .mid { text-anchor: middle; }
  .axis { stroke: #000; fill: none; shape-rendering: crispEdges; }
`;

type Tick = [number, string];

const YAxis = ({ x, y1, y2, ticks, minor }: { x: number; y1: number; y2: number; ticks: Tick[]; minor: number }) => {
  const small: string[] = [];
  const first = ticks[0][0];
  for (let y = first; y > y1; y -= minor) small.push(`M${x - 2} ${Math.round(y)}h2`);
  for (let y = first; y < y2; y += minor) small.push(`M${x - 2} ${Math.round(y)}h2`);
  return (
    <g>
      <path className="axis" d={`M${x} ${y1}V${y2}` + ticks.map(t => `M${x - 4} ${t[0]}h4`).join('') + small.join('')} />
      {ticks.map((t, i) => <text key={t[1]} className="end" x={x - 5} y={t[0] + (i === ticks.length - 1 ? 1 : 3)}>{t[1]}</text>)}
    </g>
  );
};

const XAxis = ({ x1, x2, y, ticks, minor }: { x1: number; x2: number; y: number; ticks: Tick[]; minor: number }) => {
  const small: string[] = [];
  for (let x = x1; x < x2; x += minor) small.push(`M${Math.round(x)} ${y}v3`);
  return (
    <g>
      <path className="axis" d={`M${x1} ${y}H${x2}` + ticks.map(t => `M${t[0]} ${y}v6`).join('') + small.join('')} />
      {ticks.map(t => <text key={t[1]} className="mid" x={t[0] - 1} y={y + 16}>{t[1]}</text>)}
    </g>
  );
};

const ProfilePoints = [[126, 112], [128, 131], [164, 151], [201, 171], [206, 210], [229, 210], [234, 171], [270, 151], [306, 131], [309, 112]];

const ProfileChart = () => (
  <ChartSvg width="460" height="307" viewBox="0 0 460 307">
    <path className="axis" d="M20 18h31M20 39h31" /><rect x="32" y="14" width="8" height="8" className="axis" />
    <text className="ui" x="53" y="22">Z-Xt - Sc_M201-1_c9c9c10 / R2012-10-10-15h21m53s</text>
    <text className="ui" x="53" y="43">Z - Sc_M201-1_c9c9c10 / R2012-10-10-15h21m53s</text>
    <text className="ui" x="6" y="69">RD</text><text className="ui" x="312" y="69">RG</text>
    <text className="unit" x="35" y="89">Z [mNGF]</text><text className="unit" x="105" y="89">Z [mNGF]</text>
    <YAxis x={56} y1={100} y2={222} minor={3.27} ticks={[[112, '4.00000'], [128, '3.90000'], [145, '3.80000'], [161, '3.70000'], [177, '3.60000'], [193, '3.50000'], [210, '3.40000']]} />
    <YAxis x={126} y1={100} y2={221} minor={3.94} ticks={[[102, '6.00000'], [122, '5.00000'], [141, '4.00000'], [161, '3.00000'], [181, '2.00000'], [200, '1.00000'], [220, '0']]} />
    <XAxis x1={126} x2={310} y={221} minor={6} ticks={[[126, '0'], [150, '20.000'], [198, '60.000'], [246, '100.000'], [294, '140.000']]} />
    <text className="unit mid" x="216" y="250">Xt [m]</text>
    <path className="axis" d="M126 161h184" />
    <polyline points={ProfilePoints.map(p => p.join(',')).join(' ')} fill="none" stroke="#000" />
    {ProfilePoints.map(p => <rect key={p.join()} x={p[0] - 1} y={p[1] - 1} width="3" height="3" />)}
    <text className="ui" x="330" y="260">Temp SCE= 0</text><text className="ui" x="330" y="279">Débit = 125.0000 m^(3)/s</text>
    <text className="ui" x="142" y="300">St_PROF1</text>
  </ChartSvg>
);

const PretreatmentCurve = 'M60 137L68 130Q79 123 99 116Q120 111 143 107L176 103 209 99 243 95 276 92 306 89';

const PretreatmentChart = () => (
  <ChartSvg width="331" height="324" viewBox="0 0 331 324">
    <path className="axis" d="M116 18h31" /><path d="M116 39.500h31" stroke="#b5b5b5" strokeDasharray="2 2" />
    <text className="ui" x="150" y="22">Z - St_PROF3</text><text className="ui" x="150" y="43">Z - St_PROF2</text>
    <text className="unit" x="39" y="75">Z [mNGF]</text>
    <YAxis x={60} y1={86} y2={239} minor={3.95} ticks={[[102, '4.00000'], [122, '2.00000'], [142, '0'], [162, '-2.00000'], [182, '-4.00000'], [201, '-6.00000'], [221, '-8.00000']]} />
    <XAxis x1={60} x2={306} y={239} minor={10.5} ticks={[[60, '0'], [101, '2000.00000'], [185, '6000.00000'], [269, '10000.00000']]} />
    <text className="unit mid" x="182" y="268">Dact [m^(3)/s]</text>
    <path d={PretreatmentCurve} fill="none" stroke="#b5b5b5" strokeDasharray="2 2" transform="translate(0 -1)" />
    <path d={PretreatmentCurve} fill="none" stroke="#000" />
    <text className="ui" x="140" y="318">St_PROF3</text>
  </ChartSvg>
);

const TimeChart = () => (
  <ChartSvg width="444" height="324" viewBox="0 0 444 324">
    <path className="axis" d="M20 18h31" /><path d="M20 39h28" stroke="#f0f" strokeWidth="2" strokeDasharray="6 3 3 3" />
    <text className="ui" x="53" y="22">Z - St_PROF1 - Sc_M201-1_c9c9c10 / R2012-10-10-15h21m53s</text>
    <text className="ui" x="53" y="43">Pas de temps courant</text>
    <text className="unit" x="36" y="75">Z [mNGF]</text>
    <YAxis x={57} y1={86} y2={253} minor={4.48} ticks={[[99, '3.96000'], [121, '3.92000'], [144, '3.88000'], [166, '3.84000'], [188, '3.80000'], [210, '3.76000'], [233, '3.72000']]} />
    <XAxis x1={57} x2={355} y={253} minor={10.28} ticks={[[57, '0:00:00'], [98, '0:33:20'], [140, '1:06:40'], [181, '1:40:00'], [222, '2:13:20'], [263, '2:46:40'], [304, '3:20:00'], [345, '3:53:20']]} />
    <text className="unit mid" x="206" y="282">Temps</text>
    <path d="M57 245L280 95.500H355" fill="none" stroke="#000" />
    <path d="M56.500 86V253" stroke="#f0f" strokeDasharray="5 2 2 2" />
    <rect x="57.500" y="86.500" width="35" height="17" fill="#fff" stroke="#f0f" />
    <text x="59" y="98"><tspan className="unit" fill="#f0f">Cc_P1</tspan></text>
    <text className="ui" x="375" y="311">Temp SCE= 0</text>
  </ChartSvg>
);

const Cross = ({ x, y }: { x: number; y: number }) => <path d={`M${x - 3} ${y - 3}l6 6m0-6l-6 6`} stroke="#e00000" strokeWidth=".9" />;

const Section = ({ n, dy }: { n: number; dy: number }) => (
  <g transform={`translate(0 ${dy})`}>
    <polyline points="220,91 246,74 271,60 298,60 323,46 349,30" fill="none" stroke="#000" strokeWidth="1.300" />
    {[[220, 90], [246, 74], [271, 60], [298, 60], [323, 46], [349, 30]].map(p => <Cross key={p[0]} x={p[0]} y={p[1]} />)}
    <text x="214" y="73">Lt_StoD</text><text x="219" y="63">St_PROF{n}</text><text x="239" y="57">Lt_MajD</text>
    <text x="261" y="50">Lt_Mineur</text><text x="290" y="43">Lt_MajG</text><text x="317" y="28">Lt_StoG</text>
    <text x="223" y="94">Ps_PROF{n}</text>
  </g>
);

const PlanSvg = styled.svg`
  text { font: 10px "Liberation Sans", Arial, sans-serif; fill: #111; }
  .node { font-size: 11px; font-weight: bold; }
  .big { font-size: 13px; font-weight: bold; text-anchor: middle; }
`;

const PlanMap = () => (
  <PlanSvg width="568" height="306" viewBox="0 0 568 306">
    <path d="M274 60V249" stroke="#0ff" strokeWidth="4" /><path d="M268 237h14l-6 12z" fill="#0ff" />
    <Section n={1} dy={0} /><Section n={2} dy={93} /><Section n={3} dy={186} />
    <path d="M274.500 60V249" stroke="#1010c8" />
    {[57, 249].map(y => (
      <g key={y} fill="#fff" stroke="#1515c0"><circle cx="274.500" cy={y + .5} r="4" stroke="#000" /><rect x="271.500" y={y - 2.500} width="6" height="6" strokeWidth="1.500" /></g>
    ))}
    <circle cx="274.500" cy="154" r="2.500" fill="none" stroke="#222" />
    <path d="M281.500 22h34l-17 28z" fill="#ffc800" stroke="#111" strokeWidth="1.500" />
    <path d="M298.500 256l-17 28h34z" fill="#ffc800" stroke="#111" strokeWidth="1.500" />
    <text className="node" x="279" y="61">Nd_N1</text><text className="node" x="278" y="157">Br_B1</text><text className="node" x="279" y="253">Nd_N2</text>
    <text className="big" x="298" y="40">Qapp</text><text className="big" x="300" y="276">Zimp</text>
  </PlanSvg>
);

/* ---------- data ---------- */

const runs: { name: string; runs: [string, boolean?][] }[] = [
  { name: 'Sc_M201-1_c9c9', runs: [['R2012-10-10-13h35m46s'], ['R2012-10-10-14h03m31s']] },
  { name: 'Sc_M201-1_c9c9c10', runs: [['R2012-09-13-13h17m01s'], ['R2012-10-10-15h21m53s', true]] },
  { name: 'Sc_Poub1_c10', runs: [['R2012-09-13-17h10m48s'], ['R2012-09-14-10h31m21s']] },
];

const views: [string, number, boolean?][] = [
  ['Profils en travers', 0], ['Profils en travers *', 1, true], ['Profils en long', 0], ['Temporel', 0], ['Temporel *', 1, true],
  ['Multi-Variables', 0], ['Multi-Variables *', 1], ['Pré-traitement géométrique', 0], ['Pré-traitement géométrique *', 1, true],
];

const profileRows: [string, string, string, string, boolean?][] = [
  ['0', '5.50000', 'RD', 'FkSto_K0'], ['2.000', '4.50000', '', 'FkSto_K0', true], ['32.000', '3.50000', 'Et_StoD-MajD', 'Fk_PROF1...'],
  ['62.000', '2.50000', 'Et_MajD-Mi...', 'Fk_PROF1...'], ['66.000', '0.50000', 'Et_Thalweg...', 'Fk_PROF1...', true], ['86.000', '0.50000', '', 'Fk_PROF1...', true],
  ['90.000', '2.50000', 'Et_Mineur-...', 'Fk_PROF1...'], ['120.000', '3.50000', 'Et_MajG-StoG', 'FkSto_K0'], ['150.000', '4.50000', '', 'FkSto_K0', true], ['152.000', '5.50000', 'RG', ''],
];

const dactRows = [
  ['0', '-9.70000'], ['0.03648', '-9.40000'], ['0.07488', '-9.10000'], ['0.11333', '-8.80000'], ['0.15180', '-8.50000'], ['0.19026', '-8.20000'],
  ['0.22873', '-7.90000'], ['0.26720', '-7.60000'], ['0.30568', '-7.30000'], ['0.34415', '-7.00000'], ['0.38262', '-6.70000'], ['0.42109', '-6.40000'],
];

const timeRows = [
  ['Cc_P1', '3.69762'], ['0:00:00', '3.69762'], ['0:01:40', '3.69986'], ['0:03:20', '3.70234'], ['0:05:00', '3.70460'], ['0:06:40', '3.70680'], ['0:08:20', '3.70904'],
  ['0:10:00', '3.71128'], ['0:11:40', '3.71353'], ['0:13:20', '3.71579'], ['0:15:00', '3.71805'], ['0:16:40', '3.72031'], ['0:18:20', '3.72259'], ['0:20:00', '3.72487'],
];

const network = [
  ['Nd_N1', 'Noeud à niveau continu'], ['Nd_N2', 'Noeud à niveau continu'], ['Br_B1', 'Branche de type Saint-Venant'],
  ['St_PROF1', 'Section avec un profil'], ['St_PROF2', 'Section avec un profil'], ['St_PROF3', 'Section avec un profil'],
];

const PairTable = ({ heads, rows, top, h }: { heads: string[]; rows: string[][]; top: number; h: number }) => (
  <TableBox>
    <TableClip>
      <Table>
        <thead><tr>{heads.map(x => <Th key={x}>{x}</Th>)}</tr></thead>
        <tbody>{rows.map(r => <tr key={r[0]}><Td>{r[0]}</Td><Td>{r[1]}</Td></tr>)}</tbody>
      </Table>
    </TableClip>
    <ScrollSide><Scroll top={top} h={h} /></ScrollSide>
  </TableBox>
);

/* ---------- application ---------- */

export default function App() {
  const [step, setStep] = useState(0);
  return (
    <>
      <GlobalStyle />
      <Frame>
        <TitleBar>
          <Landscape />
          <span>C:\data\Fudaa-Crue\Data\Etu201\Etu201.etu.xml | Fudaa-Crue 0.60-20121003</span>
          <WindowButtons>
            <WindowButton aria-label="Réduire"><svg width="13" height="6" viewBox="0 0 13 6"><rect x=".5" y=".5" width="12" height="5" rx="1" fill="#fff" stroke="#4c5260" /></svg></WindowButton>
            <WindowButton aria-label="Agrandir"><svg width="12" height="10" viewBox="0 0 12 10"><path d="M.5.5h11v9H.5zM3.500 3.500v3h5v-3z" fill="#fff" stroke="#4c5260" fillRule="evenodd" /></svg></WindowButton>
            <WindowButton $close aria-label="Fermer"><svg width="13" height="11" viewBox="0 0 13 11"><path d="M2 1l9 9M11 1l-9 9" stroke="#5a3f45" strokeWidth="4.500" /><path d="M2.500 1.500l8 8M10.500 1.500l-8 8" stroke="#fff" strokeWidth="2.600" /></svg></WindowButton>
          </WindowButtons>
        </TitleBar>
        <Client>
          <MainBar>
            <Tools />
            <svg width="11" height="4" viewBox="0 0 11 4"><path d="M5 0h6L8 4z" fill="#111" /></svg>
            <PerspectiveRow>
              <Perspective $w={44}>Étude</Perspective>
              <Perspective $w={76}>Modélisation</Perspective>
              <Perspective $w={86}>Compte-rendu</Perspective>
              <Perspective $w={44}>OTFA</Perspective>
              <Perspective $w={61} $on>Rapports</Perspective>
            </PerspectiveRow>
            <EditButton>
              <Svg><circle cx="8" cy="8" r="7.300" fill="#eee" stroke="#8a8a8a" /><circle cx="8" cy="8" r="5.500" fill="#dc2418" /><ellipse cx="8" cy="6" rx="3.500" ry="2.300" fill="#f08a80" opacity=".6" /></Svg>
              Édition
            </EditButton>
            <BarField><Landscape />Fichier étude: <BarInput $w={126} readOnly defaultValue="Etu201.etu.xml" /></BarField>
            <BarField><Scenario />Scénario de travail: <BarInput $w={166} readOnly /></BarField>
            <BarField><Gear />Run exploité: <BarInput $w={367} readOnly defaultValue="Sc_M201-1_c9c9c10 / R2012-10-10-15h21m53s" /></BarField>
          </MainBar>

          <Main>
            <LeftDock>
              <DockPanel title="Sélection des fichie..." tab={142}>
                <Body>
                  <ColumnHead $w="158px">Runs</ColumnHead>
                  <TreeArea>
                    <Tree $clip>
                      {runs.map(s => (
                        <React.Fragment key={s.name}>
                          <TreeItem $indent={0} $gap={2}><Expander open /><Scenario />{s.name}</TreeItem>
                          {s.runs.map(r => <TreeItem key={r[0]} $indent={20} $gap={2} $bold={r[1]}><Gear />{r[0]}</TreeItem>)}
                        </React.Fragment>
                      ))}
                    </Tree>
                    <Scroll top={79} h={56} />
                  </TreeArea>
                </Body>
              </DockPanel>

              <DockPanel title="Gestionnaire temp..." tab={142}>
                <Body>
                  <TimeGrid>
                    <TimeRow $top={0} $pad={3} $gap={3}>
                      <CheckLabel><CheckBox type="checkbox" />Pas de temps transitoires</CheckLabel>
                    </TimeRow>
                    <TimeValue>0</TimeValue>
                    <TimeRow $top={4} $pad={5} $gap={7}>
                      <Small aria-label="Configurer"><CrossTools color /></Small>
                      <TimeName $align="center">Cc_P1</TimeName>
                      <Small aria-label="Fenêtre"><Svg><path d="M0 1h16v14H0z" fill="#57a552" stroke="#555" /><path d="M0 1h16v3H0z" fill="#666" /><path d="M0 9h8v6H0z" fill="#d7ecd3" /><path d="M13 6l-5 5M8 8v3h3" stroke="#fff" fill="none" /></Svg></Small>
                      <Small aria-label="Étendre"><Svg><rect y="1" width="16" height="13" rx="2" fill="#3fc415" stroke="#2a9008" /><path d="M2 7.500L5.500 4v2.500h5V4L14 7.500 10.500 11V8.500h-5V11z" fill="#fff" /></Svg></Small>
                    </TimeRow>
                    <TimeRow $top={7} $pad={0} $gap={5}>
                      <Small $flat aria-label="Début"><Play d="M1 1h2v14H1zM16 1v14L3 8z" /></Small>
                      <Slider type="range" aria-label="Pas de temps" value={step} onChange={e => setStep(Number(e.target.value))} />
                      <Small $flat aria-label="Fin"><Play d="M14 1h2v14h-2zM1 1v14l13-7z" /></Small>
                      <Small $flat aria-label="Lecture"><Play d="M1 1v14l15-7z" /></Small>
                    </TimeRow>
                    <TimeRow $top={4} $pad={0} $gap={5}>
                      <Small $flat aria-label="Reculer"><Play d="M9 2v12L1 8zM17 2v12L9 8z" /></Small>
                      <TimeName $align="left">Cc_P1</TimeName>
                      <TimeName $align="right">Cc_P1</TimeName>
                      <Small $flat aria-label="Avancer"><Play d="M0 2v12l8-6zM8 2v12l8-6z" /></Small>
                      <TimeSpacer />
                    </TimeRow>
                  </TimeGrid>
                </Body>
              </DockPanel>

              <DockPanel title="Pas de..." tab={73} before={<PanelTab $off $w={69}>Calques</PanelTab>}>
                <Body>
                  <EmptyProps>Pas de propriétés</EmptyProps>
                  <PropsHelp><Svg><circle cx="8" cy="8" r="7.800" fill="#8f8f8f" /><path d="M5.500 6c0-3.500 5-3.300 5-.3 0 2-2.300 2-2.300 4M8.200 11v2" stroke="#bdbdbd" strokeWidth="1.700" fill="none" /></Svg></PropsHelp>
                </Body>
              </DockPanel>
            </LeftDock>

            <CenterDock>
              <DockRow $cols="minmax(0, 570fr) minmax(0, 743fr)" $gap={5}>
                <Editor>
                  <EditorHead><EditorTab $w={122} $active>Vue planimétrique</EditorTab><EditorNav /></EditorHead>
                  <EditorBody>
                    <IconRow $pad={3} $gap={7}>
                      <Arrow /><ArrowGear /><Divider /><Undo /><Magnifier /><Magnifier gray /><Magnifier green /><Hand /><AxesXY /><Divider $double /><Camera /><Photo />
                    </IconRow>
                    <IconRow $pad={4} $gap={4}>
                      <Floppy /><CheckLabel><CheckBox type="checkbox" />Travailler sur un calque</CheckLabel>
                    </IconRow>
                    <MapArea><PlanMap /></MapArea>
                    <MapStatus />
                  </EditorBody>
                </Editor>

                <Editor>
                  <EditorHead><EditorTab $w={127}>Profils en travers *<IconButton aria-label="Fermer"><CloseMark /></IconButton></EditorTab><EditorNav /></EditorHead>
                  <EditorBody>
                    <ViewToolbars actions={[{ label: 'Section', w: 65 }, { label: 'Amont', w: 81, arrow: 'left' }, { label: 'Aval', w: 71, arrow: 'right' }, { label: 'Variables', w: 73 }]} />
                    <SplitView $cols="minmax(0, 1fr) 276px">
                      <ChartArea><ProfileChart /></ChartArea>
                      <SidePane>
                        <PaneTitle>Z-Xt - Sc_M201-1_c9c9c10 / R2012-10-10-15h21m53s</PaneTitle>
                        <TableBox>
                          <TableClip>
                            <Table>
                              <colgroup><col width="11" /><col width="56" /><col width="57" /><col width="71" /><col /></colgroup>
                              <thead><tr><Th /><Th>Xt [m]</Th><Th>Z [mNGF]</Th><Th>Etiquette</Th><Th>Loi de Frott.</Th></tr></thead>
                              <tbody>
                                {profileRows.map(r => (
                                  <tr key={r[0]}><Td /><Td>{r[0]}</Td><Td>{r[1]}</Td><Td>{r[2]}</Td><Td $dim={r[4]}>{r[3]}</Td></tr>
                                ))}
                              </tbody>
                            </Table>
                          </TableClip>
                        </TableBox>
                        <CurveStatus>Courbe:Non modifiable</CurveStatus>
                      </SidePane>
                    </SplitView>
                  </EditorBody>
                </Editor>
              </DockRow>

              <DockRow $cols="minmax(0, 493fr) minmax(0, 821fr)" $gap={4}>
                <DockPanel title="Pré-traitement géométrique *" tab={187}>
                  <Body>
                    <ViewToolbars actions={[{ label: 'Changer EMH', w: 95 }, { label: 'Précédent', w: 99, arrow: 'left' }, { label: 'Suivante', w: 93, arrow: 'right' }, { label: 'Variables', w: 73 }]} />
                    <SplitView $cols="minmax(0, 1fr) 157px">
                      <ChartArea><PretreatmentChart /></ChartArea>
                      <SidePane>
                        <Combo name="Courbe" value="Z - St_PROF3" />
                        <Combo name="Courbe de référence" value="Z - St_PROF3" />
                        <PairTable heads={['Dact', 'Z']} rows={dactRows} top={8} h={30} />
                        <CurveStatus>Courbe:Non modifiable</CurveStatus>
                      </SidePane>
                    </SplitView>
                  </Body>
                </DockPanel>
                <DockPanel title="Temporel *" tab={85}>
                  <Body>
                    <ViewToolbars actions={[{ label: 'Choix des EMHs', w: 107 }, { label: 'Choix des variables', w: 123 }]} />
                    <SplitView $cols="minmax(0, 1fr) 371px">
                      <ChartArea><TimeChart /></ChartArea>
                      <SidePane>
                        <Combo name="Courbe" value="Z - St_PROF1 - Sc_M201-1_c9c9c10 / R2012-10-10-15h21m53s" />
                        <PairTable heads={['Temps', 'Z']} rows={timeRows} top={8} h={15} />
                        <CurveStatus>Courbe:Non modifiable</CurveStatus>
                      </SidePane>
                    </SplitView>
                  </Body>
                </DockPanel>
              </DockRow>
            </CenterDock>

            <RightDock>
              <DockPanel title="Gestionnaire de vues résultats" tab={195}>
                <Body $white>
                  <ColumnHead>Nodes</ColumnHead>
                  <Tree $lines>
                    {views.map(v => (
                      <TreeItem key={v[0] + v[1]} $indent={v[1] ? 21 : 0} $gap={4} $bold={v[2]}>
                        {!v[1] && <Expander open />}<Doc />{v[0]}
                      </TreeItem>
                    ))}
                  </Tree>
                </Body>
              </DockPanel>
              <DockPanel title="Réseau" tab={65}>
                <Body $white>
                  <NetTable>
                    <colgroup><col width="115" /><col /></colgroup>
                    <thead><tr><th>Nom</th><th>Valeur</th></tr></thead>
                    <tbody>
                      <tr><td><NetCell $indent={0}><Expander open /><Doc />Sc_M201-1_c9c9c</NetCell></td><td /></tr>
                      {network.map(n => (
                        <tr key={n[0]}><td><NetCell $indent={9}><Expander /><Doc />{n[0]}</NetCell></td><td>{n[1]}</td></tr>
                      ))}
                    </tbody>
                  </NetTable>
                </Body>
              </DockPanel>
            </RightDock>
          </Main>

          <StatusBar>
            <Svg><path d="M.5 8l3-2 3 4L13 1.500l2.500 1.500L7 15z" fill="#4cc330" stroke="#277a18" strokeWidth=".8" /><path d="M7 11l6-8" stroke="#b4f09e" /></Svg>
            34
          </StatusBar>
        </Client>
      </Frame>
    </>
  );
}
